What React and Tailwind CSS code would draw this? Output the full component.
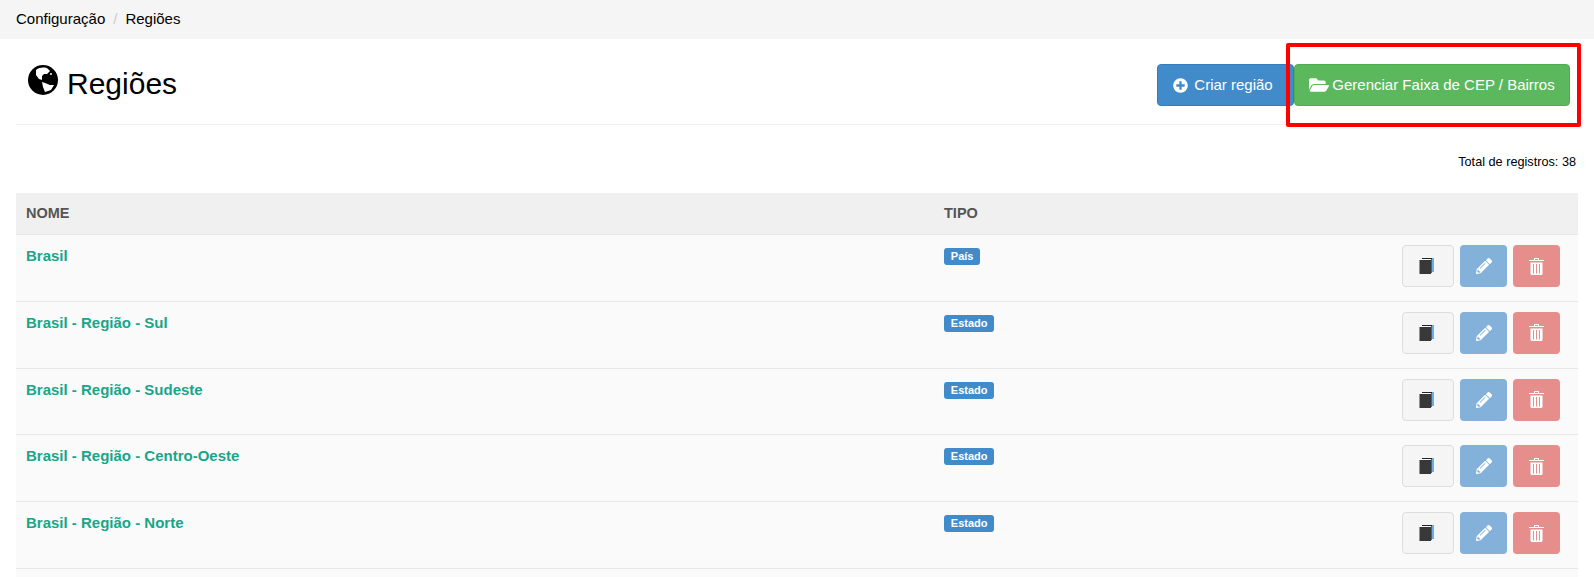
import { FaFolderOpen, FaPlusCircle, FaPencilAlt } from "react-icons/fa";

const REGIOES = [
  { nome: "Brasil", tipo: "País" },
  { nome: "Brasil - Região - Sul", tipo: "Estado" },
  { nome: "Brasil - Região - Sudeste", tipo: "Estado" },
  { nome: "Brasil - Região - Centro-Oeste", tipo: "Estado" },
  { nome: "Brasil - Região - Norte", tipo: "Estado" },
];

function GlobeIcon() {
  return (
    <svg width="30" height="30" viewBox="0 0 30 30" className="-mt-[9px]">
      <circle cx="15" cy="15" r="15" fill="#000000" />
      <path d="M8 5C12 2 18 2 20 4l2 2-3 3h-3l-2 2v4l-3-1-3-4z" fill="#ffffff" />
      <path d="M14 17l3 1 5 2h4l-3 5-6 2-2-5z" fill="#ffffff" />
      <circle cx="23" cy="9" r="1" fill="#ffffff" />
    </svg>
  );
}

function BookIcon() {
  return (
    <svg width="15" height="16" viewBox="0 0 15 16" className="-ml-[3px]">
      <rect x="3" y="0" width="10" height="1" fill="#222222" />
      <rect x="13" y="0" width="2" height="14" fill="#6aaee8" />
      <rect x="12" y="1" width="1" height="14" fill="#c0392b" />
      <rect x="2" y="1" width="10" height="1" fill="#ffffff" />
      <rect x="0" y="2" width="1" height="14" fill="#c98a3c" />
      <rect x="1" y="2" width="11" height="14" fill="#383838" />
    </svg>
  );
}

function TrashIcon() {
  return (
    <svg width="15" height="17" viewBox="0 0 15 17" fill="#ffffff">
      <path d="M5 0h5v2h5v1H0V2h5zm1 1v1h3V1z" fillRule="evenodd" />
      <path d="M1.5 4.5h12v11a1.5 1.5 0 0 1-1.5 1.5H3a1.5 1.5 0 0 1-1.5-1.5zm2.5 1.5v9.5h1V6zm3 0v9.5h1V6zm3 0v9.5h1V6z" fillRule="evenodd" />
    </svg>
  );
}

export default function App() {
  return (
    <div className="h-screen overflow-hidden bg-white text-[15px] text-black font-['Liberation_Sans',Arial,sans-serif]">
      {/* BREADCRUMB */}
      <div className="h-[39px] bg-[#f5f5f5] px-4 flex items-center">
        <span>Configuração</span>
        <span className="text-[#cccccc] px-[8px]">/</span>
        <span>Regiões</span>
      </div>

      <div className="pl-4 pr-4">
        {/* HEADER */}
        <div className="h-[86px] border-b border-[#eeeeee] flex items-start justify-between">
          <div className="flex items-center pl-3 pt-[27px] gap-[9px]">
            <GlobeIcon />
            <h1 className="text-[30px] leading-[36px]">Regiões</h1>
          </div>
          <div className="relative flex pt-[25px] pr-[8px]">
            <button className="h-[42px] w-[137px] bg-[#428bca] border border-[#357ebd] rounded text-white flex items-center justify-center gap-[6px] pr-[5px]">
              <FaPlusCircle className="w-[15px] h-[15px]" />
              Criar região
            </button>
            <button className="h-[42px] w-[276px] bg-[#5cb85c] border border-[#4cae4c] rounded text-white flex items-center justify-center gap-[3px]">
              <FaFolderOpen className="w-[20px] h-[18px]" />
              Gerenciar Faixa de CEP / Bairros
            </button>
            {/* destaque vermelho */}
            <div className="absolute left-[129px] top-[4px] w-[295px] h-[84px] border-[4px] border-[#ff0000] rounded-[2px]" />
          </div>
        </div>

        <div className="h-[68px] flex items-center justify-end text-[12.7px] pt-[7px] pr-[2px]">
          Total de registros: 38
        </div>

        {/* TABELA */}
        <div>
          <div className="h-[42px] bg-[#f0f0f0] border-b border-[#e7e7e7] grid grid-cols-[918px_1fr] items-center font-bold text-[#555555] text-[14.5px]">
            <div className="pl-[10px]">NOME</div>
            <div className="pl-[10px]">TIPO</div>
          </div>
          {REGIOES.map((r) => (
            <div
              key={r.nome}
              className="h-[66.8px] bg-[#fafafa] border-b border-[#e7e7e7] grid grid-cols-[918px_1fr]"
            >
              <div className="pl-[10px] pt-[10px] font-bold text-[#18a689]">{r.nome}</div>
              <div className="pl-[10px] pt-[13px] flex items-start justify-between pr-[18px]">
                <span className="bg-[#428bca] text-white text-[11px] font-bold leading-[11px] rounded-[3px] px-[6.8px] py-[3px]">
                  {r.tipo}
                </span>
                <div className="flex gap-[6px] -mt-[3px]">
                  <button className="w-[52px] h-[42px] bg-[#f5f5f5] border border-[#dddddd] rounded flex items-center justify-center">
                    <BookIcon />
                  </button>
                  <button className="w-[47px] h-[42px] bg-[#83b1da] rounded flex items-center justify-center">
                    <FaPencilAlt className="w-[16px] h-[16px] text-white" />
                  </button>
                  <button className="w-[47px] h-[42px] bg-[#e68e8c] rounded flex items-center justify-center">
                    <TrashIcon />
                  </button>
                </div>
              </div>
            </div>
          ))}
          <div className="h-[10px] bg-[#fafafa]" />
        </div>
      </div>
    </div>
  );
}
